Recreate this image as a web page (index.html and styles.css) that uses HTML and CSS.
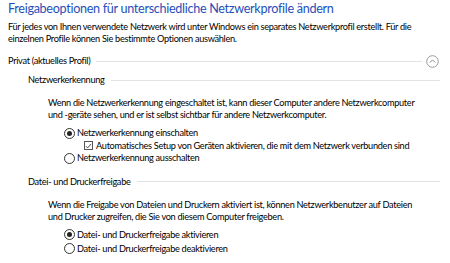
FILE: index.html
```html
<!DOCTYPE html>
<html lang="de">
<head>
<meta charset="utf-8">
<link rel="stylesheet" href="styles.css">
</head>
<body>
<div class="page">
  <h1 class="title">Freigabeoptionen für unterschiedliche Netzwerkprofile ändern</h1>
  <p class="intro">Für jedes von Ihnen verwendete Netzwerk wird unter Windows ein separates Netzwerkprofil erstellt. Für die einzelnen Profile können Sie bestimmte Optionen auswählen.</p>

  <div class="profile-head">
    <span class="label">Privat (aktuelles Profil)</span>
    <span class="rule"></span>
    <span class="chev">
      <svg width="13" height="13" viewBox="0 0 13 13"><circle cx="6.5" cy="6.5" r="5.8" fill="none" stroke="#9a9a9a" stroke-width="1"/><path d="M3.8 7.6 L6.5 4.9 L9.2 7.6" fill="none" stroke="#8a8a8a" stroke-width="1"/></svg>
    </span>
  </div>

  <section class="group">
    <div class="group-head"><span class="label">Netzwerkerkennung</span><span class="rule"></span></div>
    <p class="para">Wenn die Netzwerkerkennung eingeschaltet ist, kann dieser Computer andere Netzwerkcomputer und -geräte sehen, und er ist selbst sichtbar für andere Netzwerkcomputer.</p>
    <div class="options">
      <div class="opt"><span class="radio on"></span>Netzwerkerkennung einschalten</div>
      <div class="opt sub"><span class="check"><svg width="8" height="8" viewBox="0 0 8 8"><path d="M1 4.2 L3 6.2 L7 1.6" fill="none" stroke="#333" stroke-width="1"/></svg></span>Automatisches Setup von Geräten aktivieren, die mit dem Netzwerk verbunden sind</div>
      <div class="opt"><span class="radio"></span>Netzwerkerkennung ausschalten</div>
    </div>
  </section>

  <section class="group">
    <div class="group-head"><span class="label">Datei- und Druckerfreigabe</span><span class="rule"></span></div>
    <p class="para">Wenn die Freigabe von Dateien und Druckern aktiviert ist, können Netzwerkbenutzer auf Dateien und Drucker zugreifen, die Sie von diesem Computer freigeben.</p>
    <div class="options wide">
      <div class="opt"><span class="radio on"></span>Datei- und Druckerfreigabe aktivieren</div>
      <div class="opt"><span class="radio"></span>Datei- und Druckerfreigabe deaktivieren</div>
    </div>
  </section>
</div>
</body>
</html>
```

FILE: styles.css
```css
* { box-sizing: border-box; }
html, body { margin: 0; padding: 0; background: #fff; }
body {
  font-family: Lato, "Noto Sans", sans-serif;
  font-size: 9.2px;
  line-height: 12px;
  letter-spacing: -0.3px;
  color: #000;
  overflow: hidden;
}
.page { padding: 1px 10px 0 8px; width: 450px; }
.title {
  margin: 0;
  font-size: 12.6px;
  line-height: 16px;
  letter-spacing: -0.3px;
  font-weight: normal;
  color: #2550b8;
}
.intro { margin: 4px 0 0; width: 436px; }
.profile-head {
  display: flex;
  align-items: center;
  margin-top: 9px;
  height: 14px;
}
.label { white-space: nowrap; }
.rule { flex: 1; height: 1px; background: #e2e2e2; margin: 0 4px 0 6px; }
.chev { width: 13px; height: 13px; display: flex; margin-right: 1px; }
.group { padding-left: 20px; }
.group-head { display: flex; align-items: center; margin-top: 5px; height: 14px; }
.group-head .rule { margin-right: 0; }
.group + .group { margin-top: 10px; }
.para { margin: 10px 0 0 20px; width: 380px; }
.options { margin: 6px 0 0 36px; display: flex; flex-direction: column; }
.options.wide { gap: 1.5px; }
.opt { display: flex; align-items: center; height: 12.5px; white-space: nowrap; }
.opt.sub { padding-left: 20px; }
.radio {
  width: 11px; height: 11px; border-radius: 50%;
  border: 1px solid #333; margin-right: 2px; display: inline-flex;
  align-items: center; justify-content: center; flex: none;
}
.radio.on::after { content: ""; width: 5px; height: 5px; border-radius: 50%; background: #222; }
.check {
  width: 9px; height: 9px; border: 1px solid #555; margin-right: 3px;
  display: inline-flex; align-items: center; justify-content: center; flex: none;
}
```
